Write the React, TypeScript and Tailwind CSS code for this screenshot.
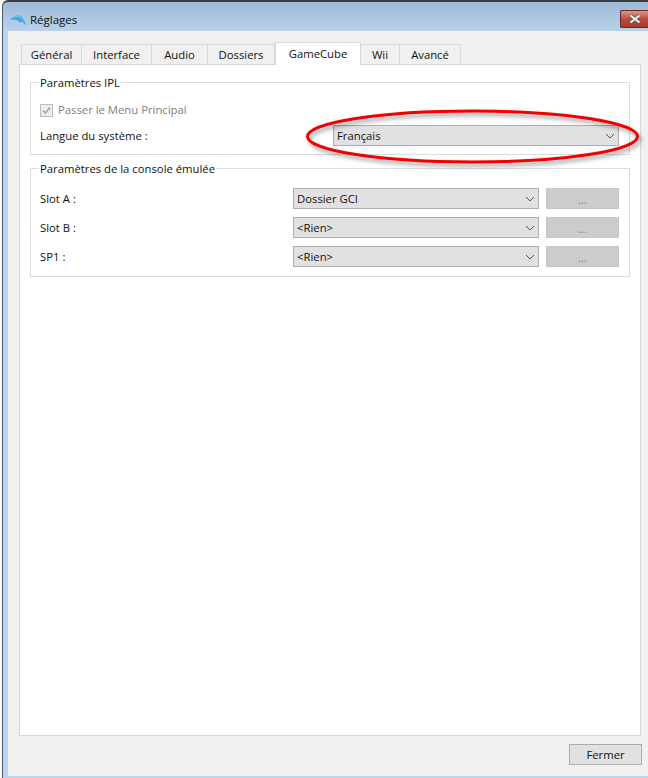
const tabs = ['Général', 'Interface', 'Audio', 'Dossiers', 'GameCube', 'Wii', 'Avancé']
const tabWidths = [61, 70, 56, 67, 86, 39, 61]

const slots = [
  { label: 'Slot A :', value: 'Dossier GCI' },
  { label: 'Slot B :', value: '<Rien>' },
  { label: 'SP1 :', value: '<Rien>' },
]

function Select({ value, className }: { value: string; className: string }) {
  return (
    <div className={`flex h-[21px] items-center justify-between border border-[#adadad] bg-[#e1e1e1] pl-[3px] pr-[3px] ${className}`}>
      <span className="pt-[2px]">{value}</span>
      <svg viewBox="0 0 10 6" className="h-[6px] w-[10px]">
        <path d="M1 1 5 5 9 1" fill="none" stroke="#555" strokeWidth="1" />
      </svg>
    </div>
  )
}

function Group({ title, className, children }: { title: string; className: string; children: React.ReactNode }) {
  return (
    <div className={`relative border border-[#dcdcdc] ${className}`}>
      <span className="absolute left-[8px] top-[-8px] bg-white px-[1px] leading-[16px]">{title}</span>
      {children}
    </div>
  )
}

export default function App() {
  return (
    <div className="relative h-[778px] w-[648px] overflow-hidden bg-white font-['Open_Sans','Noto_Sans',sans-serif] text-[11.3px] text-[#111]">
      <div className="ml-[2px] flex h-full flex-col rounded-tl-[6px] border-t-2 border-l border-[#48586a] border-t-[#3c3c3c] bg-[#b9d3ea] bg-gradient-to-b from-[#9fb9d6] to-[#bcd4ec] to-[4%]">
        <header className="flex h-[29px] shrink-0 items-start justify-between pl-[7px]">
          <div className="flex items-center gap-[4px] pt-[10px]">
            <svg viewBox="0 0 16 11" className="h-[11px] w-[16px]">
              <path d="M0 5C2 1.500 6 0 9 .5c3 .5 5.500 3.500 7 10-2-2.500-4-4-5.500-4L10 8 8 5.500C5 4.500 2.500 4.200 0 5Z" fill="#3fa6e0" />
              <path d="M3 3C5 1.500 7 1 9 1.500c2 .5 3.500 2 4.500 4" fill="none" stroke="#8fd0f2" strokeWidth=".8" />
            </svg>
            <span className="text-[11.5px] leading-[16px]">Réglages</span>
          </div>
          <button className="mt-[8px] flex h-[18px] w-[28px] items-center justify-center rounded-l-[2px] border border-r-0 border-[#6b2a26] bg-gradient-to-b from-[#d49a90] via-[#bb4a3e] to-[#a83a2e]">
            <svg viewBox="0 0 14 10" className="h-[10px] w-[14px]">
              <path d="M2.500 1.500 11.500 8.500M11.500 1.500 2.500 8.500" stroke="#555" strokeWidth="3.400" />
              <path d="M2.500 1.500 11.500 8.500M11.500 1.500 2.500 8.500" stroke="#f4f4f4" strokeWidth="2" />
            </svg>
          </button>
        </header>
        <div className="mb-[2px] ml-[5px] flex min-h-0 flex-1 flex-col bg-[#f0f0f0] pl-[11px] pr-[7px] pt-[11px]">
          <nav className="relative z-10 ml-[2px] flex items-end">
            {tabs.map((tab, i) => (
              <div
                key={tab}
                style={{ width: tabWidths[i] }}
                className={
                  tab === 'GameCube'
                    ? 'mb-[-1px] flex h-[23px] items-start justify-center border border-b-0 border-[#d9d9d9] bg-white pt-[3px]'
                    : 'flex h-[20px] items-center justify-center border border-b-0 border-l-0 border-[#d9d9d9] pt-[2px] first:border-l'
                }
              >
                {tab}
              </div>
            ))}
          </nav>
          <main className="flex-1 border border-[#d9d9d9] bg-white px-[10px] pt-[17px]">
            <Group title="Paramètres IPL" className="h-[73px] pl-[9px] pr-[10px] pt-[17px]">
              <div className="flex h-[20px] items-center gap-[5px] text-[#7d7d7d]">
                <span className="flex size-[13px] items-center justify-center border border-[#bcbcbc] bg-[#eee]">
                  <svg viewBox="0 0 11 11" className="size-[11px]">
                    <path d="M2 5.500 4.500 8 9 2.500" fill="none" stroke="#9a9a9a" strokeWidth="1.400" />
                  </svg>
                </span>
                <span>Passer le Menu Principal</span>
              </div>
              <div className="mt-[5px] flex items-center justify-between">
                <span className="pt-[2px]">Langue du système :</span>
                <Select value="Français" className="w-[286px]" />
              </div>
            </Group>
            <Group title="Paramètres de la console émulée" className="mt-[13px] h-[109px] pl-[9px] pr-[10px] pt-[19px]">
              <div className="flex flex-col gap-[8px]">
                {slots.map((slot) => (
                  <div key={slot.label} className="flex items-center">
                    <span className="w-[253px] pt-[2px]">{slot.label}</span>
                    <Select value={slot.value} className="w-[246px]" />
                    <div className="ml-[7px] flex h-[21px] flex-1 items-center justify-center border border-[#c6c6c6] bg-[#cccccc] pt-[3px] text-[#7a7a7a]">...</div>
                  </div>
                ))}
              </div>
            </Group>
          </main>
          <footer className="flex h-[40px] shrink-0 items-start justify-end pt-[8px]">
            <button className="mr-[-1px] h-[21px] w-[73px] border border-[#adadad] bg-[#e1e1e1] pt-[2px]">Fermer</button>
          </footer>
        </div>
      </div>
      <svg viewBox="0 0 648 778" className="pointer-events-none absolute inset-0 h-full w-full">
        <defs>
          <filter id="shadow" x="-10%" y="-30%" width="120%" height="160%">
            <feDropShadow dx="2" dy="3" stdDeviation="2" floodColor="#000" floodOpacity="0.4" />
          </filter>
        </defs>
        <ellipse cx="472.500" cy="136.500" rx="165" ry="25.500" fill="none" stroke="#f00000" strokeWidth="3" filter="url(#shadow)" />
      </svg>
    </div>
  )
}
